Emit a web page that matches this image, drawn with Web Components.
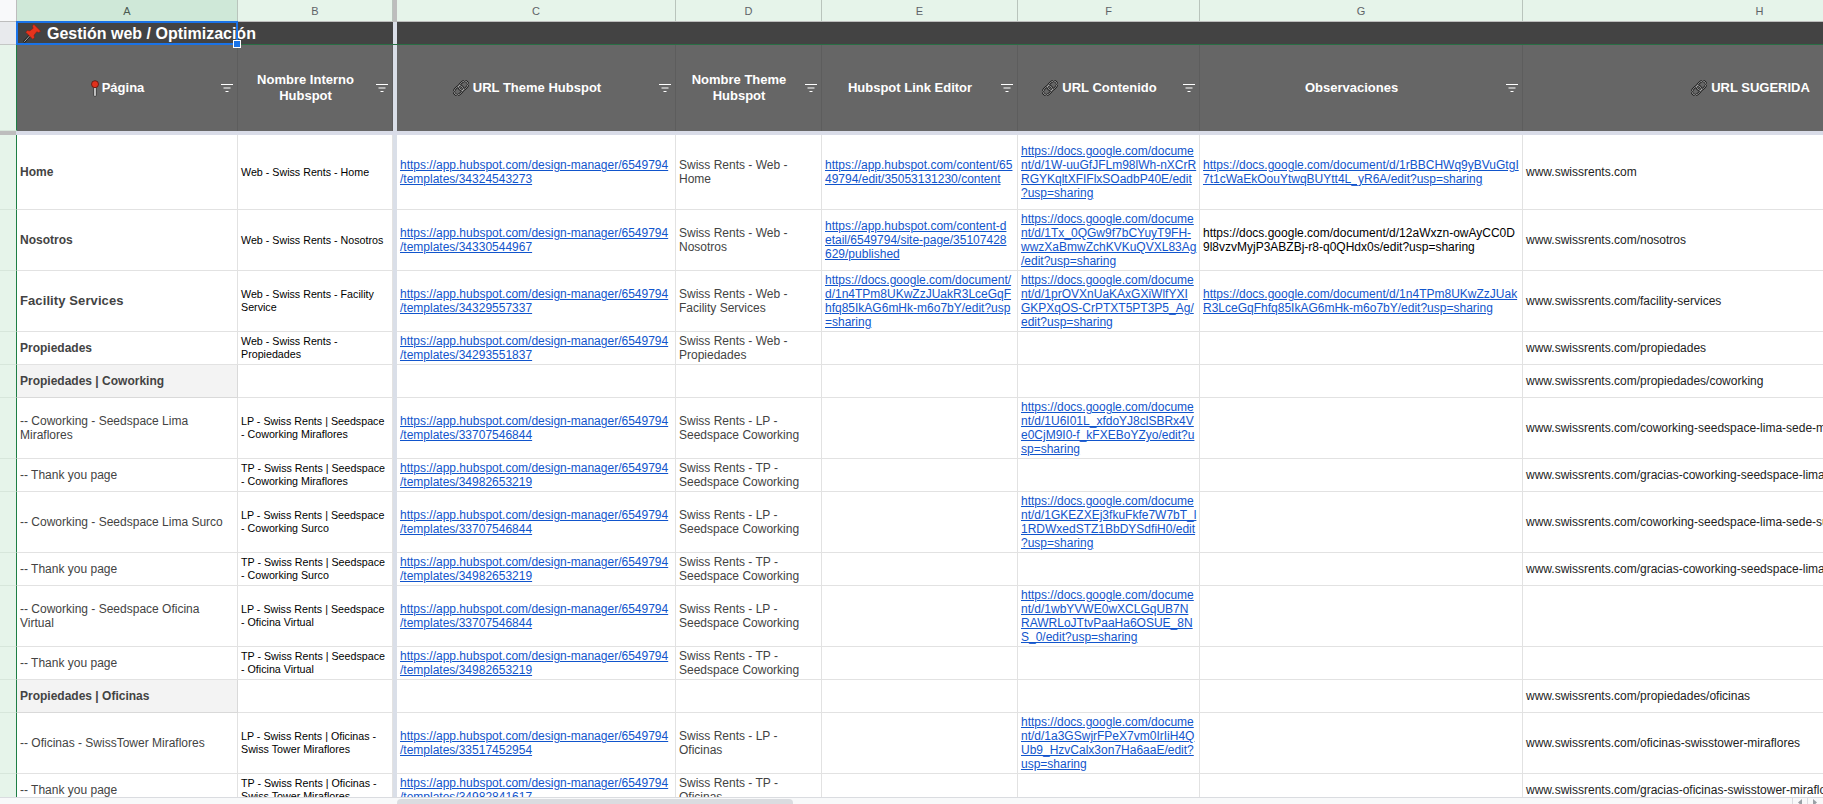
<!DOCTYPE html>
<html lang="es">
<head>
<meta charset="utf-8">
<title>Gestión web / Optimización</title>
<style>
  html, body { margin: 0; height: 100%; overflow: hidden; background: #fff; }
  body {
    font-family: "Liberation Sans", Arial, sans-serif;
    --cols: 17px 221px 155px 4px 279px 146px 196px 182px 323px 474px;
    --freeze: #dadfe8;
  }
</style>
</head>
<body>
<gs-sheet></gs-sheet>

<script>
const ICONS = {
  pushpin: `<svg width="18" height="19" viewBox="0 0 17 18">
    <path d="M7 10.5 L.8 17.2" stroke="#1c1c1c" stroke-width="2.2" fill="none"/>
    <path d="M7 10.5 L1.2 16.8" stroke="#e4e4e4" stroke-width=".7" fill="none"/>
    <path d="M10.2 .3 L16.8 6.9 L14.8 8 L13 7.3 L10.4 10.6 L10.8 13 L9.2 14.4 L2.6 7.8 L4 6.2 L6.4 6.6 L9.6 4.1 L9 2 Z" fill="#e8331c" stroke="#8a1a0e" stroke-width=".5"/>
  </svg>`,
  pin: `<svg width="8" height="17" viewBox="0 0 8 17">
    <rect x="2.8" y="7" width="2.4" height="9.4" rx="1" fill="#f4f4f4" stroke="#1c1c1c" stroke-width=".8"/>
    <circle cx="4" cy="4.2" r="3.5" fill="#e0311d" stroke="#4a0f08" stroke-width=".7"/>
  </svg>`,
  link: `<svg width="18" height="18" viewBox="0 0 16 16">
    <g transform="rotate(-45 8 8)" fill="none">
      <rect x=".4" y="5" width="9.2" height="6" rx="3" stroke="#111" stroke-width="1.9"/>
      <rect x="6.4" y="5" width="9.2" height="6" rx="3" stroke="#111" stroke-width="1.9"/>
      <rect x=".4" y="5" width="9.2" height="6" rx="3" stroke="#d4d4d4" stroke-width=".6"/>
      <rect x="6.4" y="5" width="9.2" height="6" rx="3" stroke="#d4d4d4" stroke-width=".6"/>
    </g>
  </svg>`
};

// one sheet row: gutter, the two frozen columns, the freeze bar, then the rest
const rowTemplate = document.createElement('template');
rowTemplate.innerHTML = `
  <style>
    :host {
      display: grid;
      grid-template-columns: var(--cols);
      height: var(--row-h, 33px);
      flex: none;
    }
    .gutter {
      background: #e6f4ea;
      border-right: 1px solid #1e7e45;
      border-bottom: 1px solid #d7e6db;
      box-sizing: border-box;
    }
    .freeze { background: var(--freeze); }
    :host([type="title"]) { background: #434343; border-bottom: 1px solid #2a6e45; box-sizing: border-box; }
    :host([type="title"]) .gutter { background: #e8eaed; border-right: 1px solid #c4c7c5; border-bottom: 1px solid #c4c7c5; margin-bottom: -1px; }
    :host([type="head"]) { background: #666666; }
    :host([type="letters"]) .gutter { background: #f8f9fa; border-right: 1px solid #bdbdbd; border-bottom: 1px solid #bdbdbd; }
    :host([type="letters"]) .freeze { background: #bdbdbd; }
  </style>
  <div class="gutter"></div>
  <slot name="frozen"></slot>
  <div class="freeze"></div>
  <slot></slot>
`;

class GsRow extends HTMLElement {
  constructor() {
    super();
    this.attachShadow({ mode: 'open' }).append(rowTemplate.content.cloneNode(true));
  }
  connectedCallback() {
    if (this.hasAttribute('h')) this.style.setProperty('--row-h', this.getAttribute('h') + 'px');
  }
}

const cellTemplate = document.createElement('template');
cellTemplate.innerHTML = `
  <style>
    :host {
      display: flex;
      align-items: center;
      box-sizing: border-box;
      min-width: 0;
      padding-left: 3px;
      overflow: hidden;
      font-size: 12px;
      line-height: 14px;
      color: #000;
      border-right: 1px solid #e2e2e2;
      border-bottom: 1px solid #e2e2e2;
      background: #fff;
    }
    .txt { white-space: pre; }
    :host([kind="page"]) { color: #434343; }
    :host([kind="bold"]) { color: #434343; font-weight: bold; }
    :host([kind="big"]) { color: #434343; font-weight: bold; font-size: 13px; letter-spacing: .1px; }
    :host([kind="section"]) {
      color: #434343; font-weight: bold;
      background: #f3f3f3;
      border-right-color: #d9d9d9;
      border-bottom-color: #d9d9d9;
    }
    :host([kind="small"]) { font-size: 10.7px; line-height: 13px; }
    :host([kind="gray"]) { color: #434343; }
    :host([kind="link"]) { color: #1155cc; }
    :host([kind="link"]) .txt { text-decoration: underline; }
    :host([kind="url"]) { color: #222; }
  </style>
  <div class="txt"><slot></slot></div>
`;

class GsCell extends HTMLElement {
  constructor() {
    super();
    this.attachShadow({ mode: 'open' }).append(cellTemplate.content.cloneNode(true));
  }
}

const headTemplate = document.createElement('template');
headTemplate.innerHTML = `
  <style>
    :host {
      display: flex;
      align-items: center;
      min-width: 0;
      overflow: hidden;
      box-sizing: border-box;
      background: #666666;
      color: #fff;
      font-size: 13px;
      font-weight: bold;
      line-height: 16px;
      border-right: 1px solid #5d5d5d;
    }
    .label {
      flex: 1;
      display: flex;
      align-items: center;
      justify-content: center;
      gap: 3px;
      text-align: center;
      white-space: pre;
    }
    .icon { display: flex; }
    .filter { flex: none; width: 12px; margin: 0 4px 0 3px; display: block; }
  </style>
  <div class="label"><span class="icon"></span><span><slot></slot></span></div>
  <svg class="filter" width="12" height="8" viewBox="0 0 12 8">
    <path d="M0 .5H12M2.5 4H9.5M4.5 7.5H7.5" stroke="#fff" stroke-width="1" fill="none"/>
  </svg>
`;

class GsHead extends HTMLElement {
  constructor() {
    super();
    this.attachShadow({ mode: 'open' }).append(headTemplate.content.cloneNode(true));
  }
  connectedCallback() {
    const name = this.getAttribute('icon');
    if (name) this.shadowRoot.querySelector('.icon').innerHTML = ICONS[name];
    else this.shadowRoot.querySelector('.icon').remove();
  }
}

class GsLetter extends HTMLElement {
  constructor() {
    super();
    this.attachShadow({ mode: 'open' }).innerHTML = `
      <style>
        :host {
          display: flex;
          align-items: center;
          justify-content: center;
          box-sizing: border-box;
          font-size: 11px;
          color: #5f6368;
          background: #e6f4ea;
          border-right: 1px solid #b9c4bc;
          border-bottom: 1px solid #bdbdbd;
        }
        :host([active]) { background: #cfe8d8; color: #4a5a50; }
      </style>
      <slot></slot>`;
  }
}

class GsTitle extends HTMLElement {
  constructor() {
    super();
    this.attachShadow({ mode: 'open' }).innerHTML = `
      <style>
        :host {
          display: flex;
          align-items: center;
          gap: 6px;
          padding: 1px 0 0 6px;
          min-width: 0;
          color: #fff;
          font-size: 16px;
          font-weight: bold;
          white-space: nowrap;
          background: #434343;
        }
        svg { flex: none; }
      </style>
      ${ICONS.pushpin}<span><slot></slot></span>`;
  }
}

// blue cell cursor over A1, with its fill handle
class GsSelection extends HTMLElement {
  constructor() {
    super();
    this.attachShadow({ mode: 'open' }).innerHTML = `
      <style>
        :host {
          position: absolute;
          left: 16px;
          top: 21px;
          width: 222px;
          height: 24px;
          box-sizing: border-box;
          border: 2px solid #1a73e8;
          pointer-events: none;
        }
        .handle {
          position: absolute;
          right: -5px;
          bottom: -5px;
          width: 6px;
          height: 6px;
          background: #1a73e8;
          border: 1px solid #fff;
        }
      </style>
      <div class="handle"></div>`;
  }
}

class GsScrollbar extends HTMLElement {
  constructor() {
    super();
    this.attachShadow({ mode: 'open' }).innerHTML = `
      <style>
        :host {
          display: flex;
          flex: none;
          height: 7px;
          box-sizing: border-box;
          border-top: 1px solid #dadce0;
          background: #f8f9fa;
          overflow: hidden;
        }
        .left { width: 397px; flex: none; }
        .thumb { width: 396px; flex: none; background: #dadce0; border-radius: 4px; margin-top: 1px; height: 12px; }
        .rest { flex: 1; }
        .arrows { width: 31px; flex: none; display: flex; }
        .arrows svg { width: 14px; height: 6px; border-left: 1px solid #dadce0; }
      </style>
      <div class="left"></div>
      <div class="thumb"></div>
      <div class="rest"></div>
      <div class="arrows">
        <svg viewBox="0 0 14 6"><path d="M9 1 L5 4.5 L9 8Z" fill="#9aa0a6"/></svg>
        <svg viewBox="0 0 14 6"><path d="M5 1 L9 4.5 L5 8Z" fill="#9aa0a6"/></svg>
      </div>`;
  }
}

// ---- data ----
const HUB = 'https://app.hubspot.com/design-manager/6549794\n/templates/';
const DOC = 'https://docs.google.com/docume\n';
const WWW = 'www.swissrents.com';

const ROWS = [
  { h: 75, a: 'Home', ak: 'bold', b: 'Web - Swiss Rents - Home', c: HUB + '34324543273', d: 'Swiss Rents - Web -\nHome',
    e: 'https://app.hubspot.com/content/65\n49794/edit/35053131230/content',
    f: DOC + 'nt/d/1W-uuGfJFLm98lWh-nXCrR\nRGYKqltXFIFlxSOadbP40E/edit\n?usp=sharing',
    g: 'https://docs.google.com/document/d/1rBBCHWq9yBVuGtgI\n7t1cWaEkOouYtwqBUYtt4L_yR6A/edit?usp=sharing', gk: 'link', h2: WWW },
  { h: 61, a: 'Nosotros', ak: 'bold', b: 'Web - Swiss Rents - Nosotros', c: HUB + '34330544967', d: 'Swiss Rents - Web -\nNosotros',
    e: 'https://app.hubspot.com/content-d\netail/6549794/site-page/35107428\n629/published',
    f: DOC + 'nt/d/1Tx_0QGw9f7bCYuyT9FH-\nwwzXaBmwZchKVKuQVXL83Ag\n/edit?usp=sharing',
    g: 'https://docs.google.com/document/d/12aWxzn-owAyCC0D\n9l8vzvMyjP3ABZBj-r8-q0QHdx0s/edit?usp=sharing', gk: 'plain', h2: WWW + '/nosotros' },
  { h: 61, a: 'Facility Services', ak: 'big', b: 'Web - Swiss Rents - Facility\nService', c: HUB + '34329557337', d: 'Swiss Rents - Web -\nFacility Services',
    e: 'https://docs.google.com/document/\nd/1n4TPm8UKwZzJUakR3LceGqF\nhfq85IkAG6mHk-m6o7bY/edit?usp\n=sharing',
    f: DOC + 'nt/d/1prOVXnUaKAxGXiWlfYXI\nGKPXqOS-CrPTXT5PT3P5_Ag/\nedit?usp=sharing',
    g: 'https://docs.google.com/document/d/1n4TPm8UKwZzJUak\nR3LceGqFhfq85IkAG6mHk-m6o7bY/edit?usp=sharing', gk: 'link', h2: WWW + '/facility-services' },
  { h: 33, a: 'Propiedades', ak: 'bold', b: 'Web - Swiss Rents -\nPropiedades', c: HUB + '34293551837', d: 'Swiss Rents - Web -\nPropiedades', h2: WWW + '/propiedades' },
  { h: 33, a: 'Propiedades | Coworking', ak: 'section', h2: WWW + '/propiedades/coworking' },
  { h: 61, a: '-- Coworking - Seedspace Lima\nMiraflores', b: 'LP - Swiss Rents | Seedspace\n- Coworking Miraflores', c: HUB + '33707546844', d: 'Swiss Rents - LP -\nSeedspace Coworking',
    f: DOC + 'nt/d/1U6I01L_xfdoYJ8clSBRx4V\ne0CjM9I0-f_kFXEBoYZyo/edit?u\nsp=sharing', h2: WWW + '/coworking-seedspace-lima-sede-miraflores' },
  { h: 33, a: '-- Thank you page', b: 'TP - Swiss Rents | Seedspace\n- Coworking Miraflores', c: HUB + '34982653219', d: 'Swiss Rents - TP -\nSeedspace Coworking', h2: WWW + '/gracias-coworking-seedspace-lima-sede-miraflores' },
  { h: 61, a: '-- Coworking - Seedspace Lima Surco', b: 'LP - Swiss Rents | Seedspace\n- Coworking Surco', c: HUB + '33707546844', d: 'Swiss Rents - LP -\nSeedspace Coworking',
    f: DOC + 'nt/d/1GKEZXEj3fkuFkfe7W7bT_l\n1RDWxedSTZ1BbDYSdfiH0/edit\n?usp=sharing', h2: WWW + '/coworking-seedspace-lima-sede-surco' },
  { h: 33, a: '-- Thank you page', b: 'TP - Swiss Rents | Seedspace\n- Coworking Surco', c: HUB + '34982653219', d: 'Swiss Rents - TP -\nSeedspace Coworking', h2: WWW + '/gracias-coworking-seedspace-lima-sede-surco' },
  { h: 61, a: '-- Coworking - Seedspace Oficina\nVirtual', b: 'LP - Swiss Rents | Seedspace\n- Oficina Virtual', c: HUB + '33707546844', d: 'Swiss Rents - LP -\nSeedspace Coworking',
    f: DOC + 'nt/d/1wbYVWE0wXCLGqUB7N\nRAWRLoJTtvPaaHa6OSUE_8N\nS_0/edit?usp=sharing' },
  { h: 33, a: '-- Thank you page', b: 'TP - Swiss Rents | Seedspace\n- Oficina Virtual', c: HUB + '34982653219', d: 'Swiss Rents - TP -\nSeedspace Coworking' },
  { h: 33, a: 'Propiedades | Oficinas', ak: 'section', h2: WWW + '/propiedades/oficinas' },
  { h: 61, a: '-- Oficinas - SwissTower Miraflores', b: 'LP - Swiss Rents | Oficinas -\nSwiss Tower Miraflores', c: HUB + '33517452954', d: 'Swiss Rents - LP -\nOficinas',
    f: DOC + 'nt/d/1a3GSwjrFPeX7vm0IrIiH4Q\nUb9_HzvCalx3on7Ha6aaE/edit?\nusp=sharing', h2: WWW + '/oficinas-swisstower-miraflores' },
  { h: 33, a: '-- Thank you page', b: 'TP - Swiss Rents | Oficinas -\nSwiss Tower Miraflores', c: HUB + '34982841617', d: 'Swiss Rents - TP -\nOficinas', h2: WWW + '/gracias-oficinas-swisstower-miraflores' }
];

const HEADS = [
  ['Nombre Theme\nHubspot'], ['Hubspot Link Editor'], ['URL Contenido', 'link'], ['Observaciones'], ['URL SUGERIDA', 'link']
];

function cell(kind, text, slot) {
  const el = document.createElement('gs-cell');
  if (kind) el.setAttribute('kind', kind);
  if (slot) el.slot = slot;
  el.textContent = text || '';
  return el;
}

function head(text, icon, slot) {
  const el = document.createElement('gs-head');
  if (icon) el.setAttribute('icon', icon);
  if (slot) el.slot = slot;
  el.textContent = text;
  return el;
}

const sheetTemplate = document.createElement('template');
sheetTemplate.innerHTML = `
  <style>
    :host {
      display: flex;
      flex-direction: column;
      position: relative;
      width: 1823px;
      height: 804px;
      overflow: hidden;
      background: #fff;
    }
    .frozen-line { flex: none; height: 4px; display: flex; background: #d9dce8; }
    .frozen-line div { width: 16px; background: #bdbdbd; }
    .body { flex: 1; min-height: 0; overflow: hidden; display: flex; flex-direction: column; }
  </style>
  <div id="top"></div>
  <div class="frozen-line"><div></div></div>
  <div class="body"></div>
`;

class GsSheet extends HTMLElement {
  constructor() {
    super();
    this.attachShadow({ mode: 'open' }).append(sheetTemplate.content.cloneNode(true));
  }
  connectedCallback() {
    const top = this.shadowRoot.getElementById('top');

    const letters = document.createElement('gs-row');
    letters.setAttribute('type', 'letters');
    letters.setAttribute('h', '22');
    'ABCDEFGH'.split('').forEach((l, i) => {
      const el = document.createElement('gs-letter');
      el.textContent = l;
      if (i < 2) el.slot = 'frozen';
      if (i === 0) el.setAttribute('active', '');
      letters.append(el);
    });

    const title = document.createElement('gs-row');
    title.setAttribute('type', 'title');
    title.setAttribute('h', '23');
    const titleText = document.createElement('gs-title');
    titleText.slot = 'frozen';
    titleText.style.gridColumn = 'span 2';
    titleText.textContent = 'Gestión web / Optimización';
    title.append(titleText);

    const heads = document.createElement('gs-row');
    heads.setAttribute('type', 'head');
    heads.setAttribute('h', '86');
    heads.append(head('Página', 'pin', 'frozen'), head('Nombre Interno\nHubspot', null, 'frozen'), head('URL Theme Hubspot', 'link'));
    HEADS.forEach(([t, i]) => heads.append(head(t, i)));

    top.append(letters, title, heads);

    const body = this.shadowRoot.querySelector('.body');
    ROWS.forEach(r => {
      const row = document.createElement('gs-row');
      row.setAttribute('h', r.h);
      row.append(
        cell(r.ak || 'page', r.a, 'frozen'),
        cell('small', r.b, 'frozen'),
        cell('link', r.c),
        cell('gray', r.d),
        cell('link', r.e),
        cell('link', r.f),
        cell(r.gk === 'link' ? 'link' : '', r.g),
        cell('url', r.h2)
      );
      body.append(row);
    });

    this.shadowRoot.append(document.createElement('gs-scrollbar'), document.createElement('gs-selection'));
  }
}

customElements.define('gs-row', GsRow);
customElements.define('gs-cell', GsCell);
customElements.define('gs-head', GsHead);
customElements.define('gs-letter', GsLetter);
customElements.define('gs-title', GsTitle);
customElements.define('gs-selection', GsSelection);
customElements.define('gs-scrollbar', GsScrollbar);
customElements.define('gs-sheet', GsSheet);
</script>
</body>
</html>
